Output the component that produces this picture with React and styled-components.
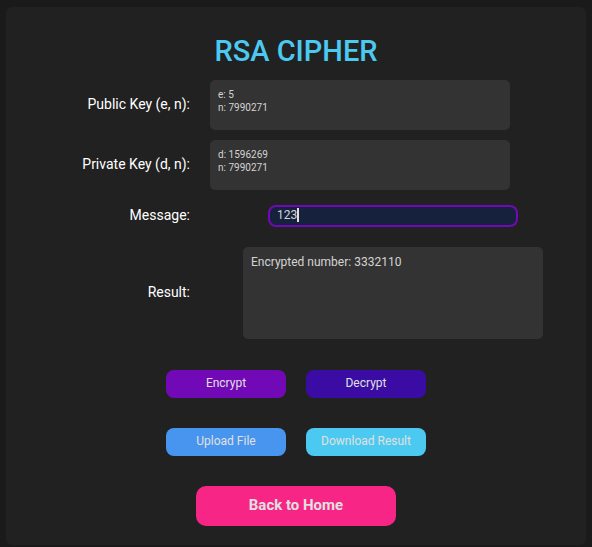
import React, { useState } from "react";
import styled, { createGlobalStyle } from "styled-components";

const GlobalStyle = createGlobalStyle`
  * { box-sizing: border-box; }
  body {
    margin: 0;
    background: #1a1a1a;
    color: #ffffff;
    font-family: Roboto, "Liberation Sans", sans-serif;
  }
`;

const Panel = styled.main`
  margin: 7px 6px 2px;
  padding: 28px 0 19px;
  border-radius: 6px;
  background: #212121;
`;

const Title = styled.h1`
  margin: 0 0 12px;
  font-size: 29px;
  line-height: 33px;
  font-weight: 500;
  text-align: center;
  color: #4cc9f0;
`;

const Form = styled.div`
  display: grid;
  grid-template-columns: 194px 1fr;
  row-gap: 10px;
  align-items: center;
`;

const Label = styled.label`
  padding: 0 10px 2px 0;
  font-size: 14px;
  line-height: 16px;
  text-align: right;
`;

const Cell = styled.div`
  display: flex;
  justify-content: ${(p) => (p.$centered ? "center" : "flex-start")};
  padding: ${(p) => (p.$centered ? "5px 0" : "0 10px")};
`;

const ReadOnlyBox = styled.textarea`
  display: block;
  width: 300px;
  max-width: 100%;
  height: ${(p) => (p.$large ? 92 : 50)}px;
  padding: 8px;
  border: 0;
  border-radius: 5px;
  outline: none;
  resize: none;
  background: #333333;
  color: #d3d3d3;
  font-family: inherit;
  font-size: ${(p) => (p.$large ? 12 : 10)}px;
  line-height: ${(p) => (p.$large ? 14 : 13)}px;
`;

const MessageField = styled.div`
  position: relative;
  width: 250px;
  max-width: 100%;
  font-size: 12px;
`;

const MessageInput = styled.input`
  display: block;
  width: 100%;
  height: 22px;
  padding: 0 7px 2px;
  border: 2px solid #7209b7;
  border-radius: 8px;
  outline: none;
  background: #16213e;
  color: #d3d3d3;
  caret-color: transparent;
  font-family: inherit;
  font-size: 12px;
`;

const Caret = styled.span`
  position: absolute;
  top: 3px;
  width: 2px;
  height: 14px;
  background: #e0e0e0;
  pointer-events: none;
`;

const Actions = styled.div`
  display: grid;
  grid-template-columns: 120px 120px;
  justify-content: center;
  gap: 30px 20px;
  margin: 26px 0 30px;
`;

const ActionButton = styled.button`
  height: 28px;
  padding: 0 0 2px;
  border: 0;
  border-radius: 8px;
  background: ${(p) => p.$color};
  color: #e0e0e0;
  font-family: inherit;
  font-size: 12px;
  cursor: pointer;
`;

const HomeButton = styled(ActionButton)`
  display: block;
  width: 200px;
  height: 40px;
  margin: 0 auto;
  border-radius: 10px;
  font-size: 15px;
  font-weight: 700;
`;

export default function App() {
  const [message, setMessage] = useState("123");

  return (
    <>
      <GlobalStyle />
      <Panel>
        <Title>RSA CIPHER</Title>
        <Form>
          <Label htmlFor="public-key">Public Key (e, n):</Label>
          <Cell>
            <ReadOnlyBox id="public-key" readOnly value={"e: 5\nn: 7990271"} />
          </Cell>
          <Label htmlFor="private-key">Private Key (d, n):</Label>
          <Cell>
            <ReadOnlyBox id="private-key" readOnly value={"d: 1596269\nn: 7990271"} />
          </Cell>
          <Label htmlFor="message">Message:</Label>
          <Cell $centered>
            <MessageField>
              <MessageInput
                id="message"
                value={message}
                onChange={(e) => setMessage(e.target.value)}
              />
              <Caret style={{ left: `calc(9px + ${message.length}ch)` }} />
            </MessageField>
          </Cell>
          <Label htmlFor="result">Result:</Label>
          <Cell $centered>
            <ReadOnlyBox id="result" $large readOnly value="Encrypted number: 3332110" />
          </Cell>
        </Form>
        <Actions>
          <ActionButton $color="#7209b7">Encrypt</ActionButton>
          <ActionButton $color="#3a0ca3">Decrypt</ActionButton>
          <ActionButton $color="#4895ef">Upload File</ActionButton>
          <ActionButton $color="#4cc9f0">Download Result</ActionButton>
        </Actions>
        <HomeButton $color="#f72585">Back to Home</HomeButton>
      </Panel>
    </>
  );
}
